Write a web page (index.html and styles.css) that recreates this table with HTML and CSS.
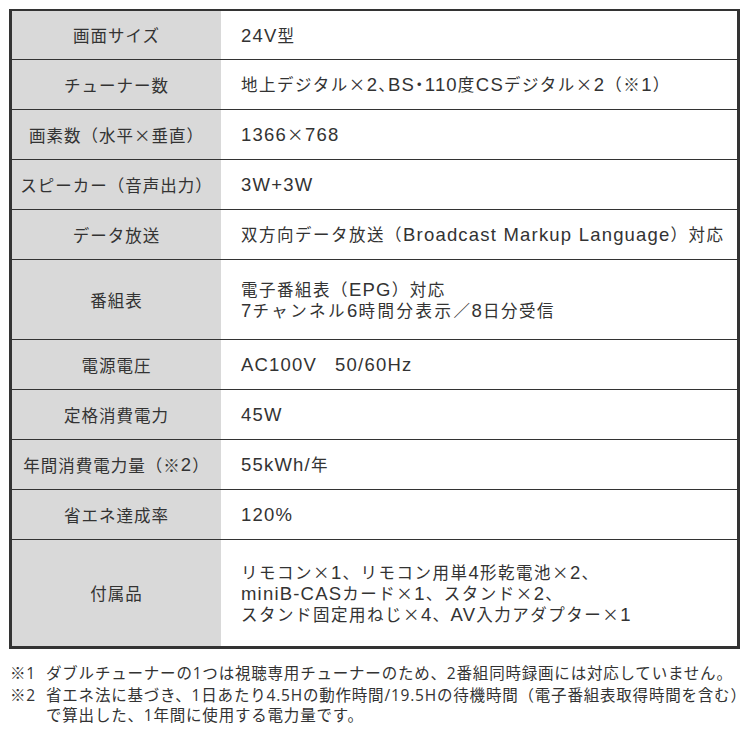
FILE: index.html
```html
<!DOCTYPE html>
<html lang="ja">
<head>
<meta charset="utf-8">
<link rel="stylesheet" href="styles.css">
</head>
<body>
<div class="spec">
  <div class="row"><div class="label">画面サイズ</div><div class="value"><span class="en">24V</span>型</div></div>
  <div class="row"><div class="label">チューナー数</div><div class="value">地上デジタル×<span class="en">2</span><span class="hw">、</span><span class="en">BS</span><span class="hw">・</span><span class="en">110</span>度<span class="en">CS</span>デジタル×<span class="en">2</span>（※<span class="en">1</span>）</div></div>
  <div class="row"><div class="label">画素数（水平×垂直）</div><div class="value"><span class="en">1366</span>×<span class="en">768</span></div></div>
  <div class="row"><div class="label">スピーカー（音声出力）</div><div class="value"><span class="en">3W+3W</span></div></div>
  <div class="row"><div class="label">データ放送</div><div class="value">双方向データ放送（<span class="en">Broadcast Markup Language</span>）対応</div></div>
  <div class="row tall2"><div class="label">番組表</div><div class="value">電子番組表（<span class="en">EPG</span>）対応<br><span class="en">7</span><span class="wide">チャンネル</span><span class="en">6</span><span class="wide">時間分表示</span>／<span class="en">8</span>日分受信</div></div>
  <div class="row"><div class="label">電源電圧</div><div class="value"><span class="en">AC100V</span>　<span class="en">50/60Hz</span></div></div>
  <div class="row"><div class="label">定格消費電力</div><div class="value"><span class="en">45W</span></div></div>
  <div class="row"><div class="label">年間消費電力量（※<span class="en">2</span>）</div><div class="value"><span class="en">55kWh/</span>年</div></div>
  <div class="row"><div class="label">省エネ達成率</div><div class="value"><span class="en">120%</span></div></div>
  <div class="row tall3"><div class="label">付属品</div><div class="value">リモコン×<span class="en">1</span>、リモコン用単<span class="en">4</span>形乾電池×<span class="en">2</span>、<br><span class="en">miniB-CAS</span>カード×<span class="en">1</span>、スタンド×<span class="en">2</span>、<br>スタンド固定用ねじ×<span class="en">4</span>、<span class="en">AV</span>入力アダプター×<span class="en">1</span></div></div>
</div>
<div class="notes">
  <div class="note"><span class="mark">※1</span><span class="ntext">ダブルチューナーの1つは視聴専用チューナーのため、2番組同時録画には対応していません。</span></div>
  <div class="note"><span class="mark">※2</span><span class="ntext">省エネ法に基づき、1日あたり4.5Hの動作時間/19.5Hの待機時間（電子番組表取得時間を含む）<br>で算出した、1年間に使用する電力量です。</span></div>
</div>
</body>
</html>
```

FILE: styles.css
```css
html, body {
  margin: 0;
  padding: 0;
  background: #ffffff;
}
body {
  font-family: "Noto Sans CJK JP", "Noto Sans", sans-serif;
  color: #333333;
  padding: 9px 0 0 9px;
}
.spec {
  width: 725px;
  border: 3px solid #333333;
  border-top-width: 2px;
}
.row {
  display: grid;
  grid-template-columns: 209px 1fr;
  min-height: 49px;
  border-top: 1px solid #333333;
}
.row:first-child {
  border-top: none;
  min-height: 48px;
}
.row.tall2 { min-height: 79px; }
.row.tall3 { min-height: 106px; }
.label {
  background: #d9d9d9;
  display: flex;
  align-items: center;
  justify-content: center;
  font-size: 16.5px;
  letter-spacing: 1px;
  line-height: 20px;
}
.value {
  display: block;
  align-self: center;
  padding-left: 20px;
  font-size: 16.5px;
  letter-spacing: 1.5px;
  line-height: 20px;
}
.en {
  font-family: "Liberation Sans", Arial, sans-serif;
  font-size: 18.5px;
  letter-spacing: 1.2px;
}
.hw {
  font-feature-settings: "halt";
}
.wide {
  letter-spacing: 2.5px;
}
.notes {
  margin-top: 14px;
  margin-left: 1px;
  font-family: "Open Sans", "Noto Sans CJK JP", sans-serif;
  font-size: 15.5px;
  letter-spacing: 0.8px;
  line-height: 20px;
}
.note {
  display: flex;
  margin-bottom: 2px;
}
.mark {
  flex: none;
  width: 36px;
}
.ntext {
  white-space: nowrap;
}
```
